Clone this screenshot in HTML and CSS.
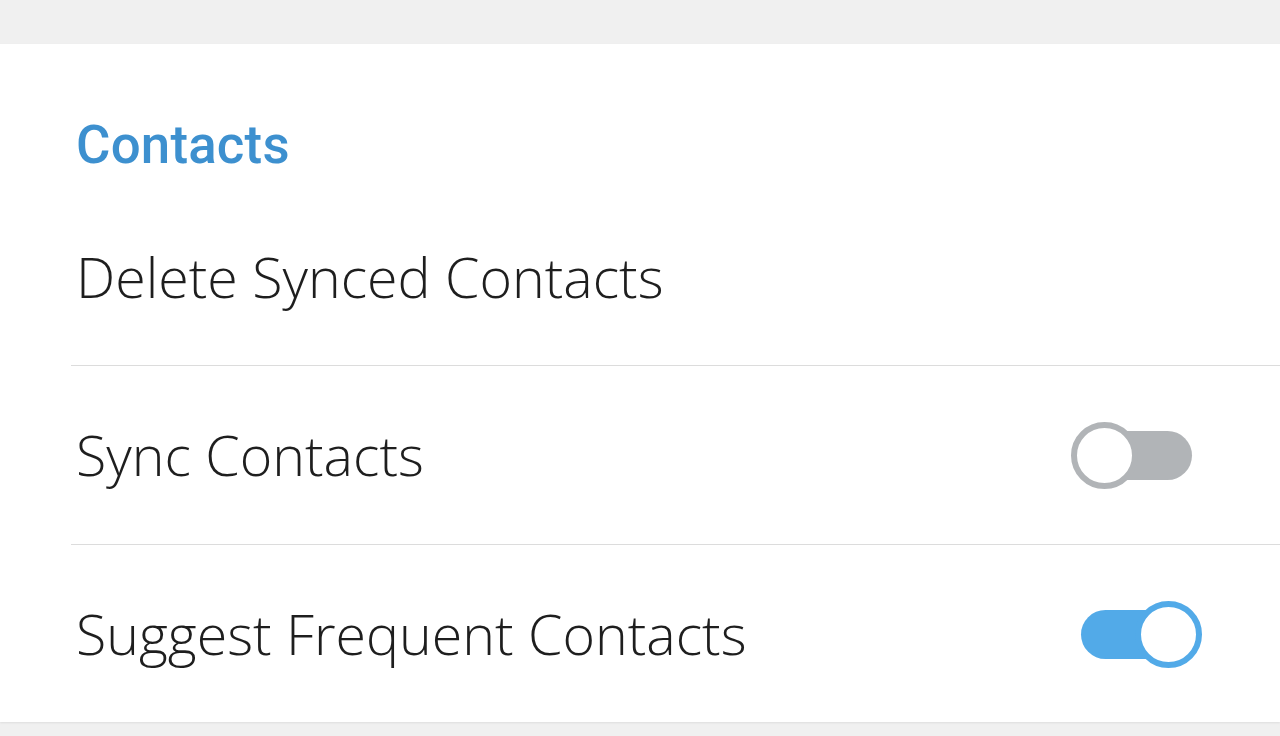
FILE: index.html
```html
<!DOCTYPE html>
<html lang="en">
<head>
<meta charset="utf-8">
<title>Contacts settings</title>
<link rel="stylesheet" href="styles.css">
</head>
<body>
  <div class="top-band"></div>
  <section class="card">
    <h2 class="section-title">Contacts</h2>
    <div class="list">
      <div class="row row-first">
        <span class="label">Delete Synced Contacts</span>
      </div>
      <div class="row">
        <span class="label">Sync Contacts</span>
        <span class="switch switch-off" role="switch" aria-checked="false"><span class="knob"></span></span>
      </div>
      <div class="row">
        <span class="label">Suggest Frequent Contacts</span>
        <span class="switch switch-on" role="switch" aria-checked="true"><span class="knob"></span></span>
      </div>
    </div>
  </section>
  <div class="bottom-band"></div>
</body>
</html>
```

FILE: styles.css
```css
html, body {
  margin: 0;
  padding: 0;
}
body {
  background: #f0f0f0;
  width: 1280px;
  height: 736px;
  overflow: hidden;
  font-family: "Open Sans", "Noto Sans", sans-serif;
}
.top-band {
  height: 44px;
}
.card {
  background: #ffffff;
  height: 678px;
  box-shadow: 0 1px 2px rgba(0,0,0,0.08);
  display: flex;
  flex-direction: column;
}
.section-title {
  margin: 0;
  padding: 71px 0 0 76px;
  height: 60px;
  line-height: 60px;
  font-family: Roboto, "Noto Sans", sans-serif;
  font-weight: 500;
  font-size: 52.8px;
  color: #3d90cf;
  letter-spacing: 0.2px;
}
.list {
  margin-left: 71px;
  display: flex;
  flex-direction: column;
}
.row {
  height: 178px;
  border-top: 1px solid #dcdcdc;
  display: flex;
  align-items: center;
  justify-content: space-between;
  padding-right: 88px;
}
.row-first {
  border-top: none;
  height: 190px;
  align-items: flex-start;
  padding-top: 72px;
  box-sizing: border-box;
}
.label {
  font-weight: 300;
  font-size: 55.5px;
  line-height: 60px;
  color: #1e1e1e;
  padding-left: 5px;
}
.switch {
  position: relative;
  width: 111px;
  height: 49px;
  border-radius: 25px;
  flex: none;
}
.switch-off {
  background: #b1b4b7;
}
.switch-on {
  background: #52aae8;
}
.knob {
  position: absolute;
  top: -9px;
  width: 55px;
  height: 55px;
  border-radius: 50%;
  background: #ffffff;
  border: 6px solid #b1b4b7;
}
.switch-off .knob {
  left: -10px;
}
.switch-on .knob {
  right: -10px;
  border-color: #52aae8;
}
```
